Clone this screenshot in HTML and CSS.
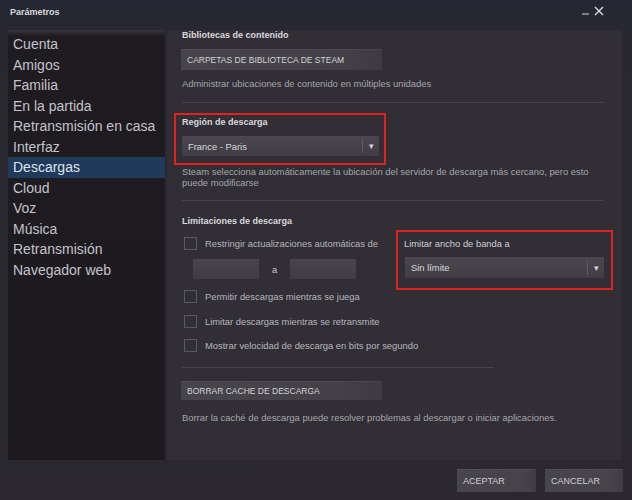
FILE: index.html
```html
<!DOCTYPE html>
<html lang="es">

<head>
  <meta charset="UTF-8">
  <meta name="viewport" content="width=device-width, initial-scale=1.0">
  <title>Parámetros</title>
  <link rel="stylesheet" href="styles.css">
</head>

<body>

  <div class="window">

    <header class="titlebar">
      <span class="title">Parámetros</span>
      <div class="win-controls">
        <svg class="win-min" width="8" height="8" viewBox="0 0 8 8">
          <line x1="0" y1="7" x2="7" y2="7" stroke="#bdbbc0" stroke-width="1.2" />
        </svg>
        <svg class="win-close" width="10" height="10" viewBox="0 0 10 10">
          <line x1="1" y1="1" x2="9" y2="9" stroke="#d6d4d9" stroke-width="1.4" />
          <line x1="9" y1="1" x2="1" y2="9" stroke="#d6d4d9" stroke-width="1.4" />
        </svg>
      </div>
    </header>

    <div class="body-row">

      <nav class="sidebar">
        <a href="#">Cuenta</a>
        <a href="#">Amigos</a>
        <a href="#">Familia</a>
        <a href="#">En la partida</a>
        <a href="#">Retransmisión en casa</a>
        <a href="#">Interfaz</a>
        <a href="#" class="active">Descargas</a>
        <a href="#">Cloud</a>
        <a href="#">Voz</a>
        <a href="#">Música</a>
        <a href="#">Retransmisión</a>
        <a href="#">Navegador web</a>
      </nav>

      <main class="panel">

        <h2 class="section-title">Bibliotecas de contenido</h2>
        <button class="btn btn-wide">Carpetas de biblioteca de Steam</button>
        <p class="desc desc-libraries">Administrar ubicaciones de contenido en múltiples unidades</p>

        <div class="rule rule-long"></div>

        <div class="highlight region-box">
          <h2 class="section-title">Región de descarga</h2>
          <div class="dropdown">
            <span class="dropdown-value">France - Paris</span>
            <span class="dropdown-arrow">&#9662;</span>
          </div>
        </div>
        <p class="desc desc-region">Steam selecciona automáticamente la ubicación del servidor de descarga más cercano, pero esto puede modificarse</p>

        <div class="rule rule-long rule-region"></div>

        <h2 class="section-title limits-title">Limitaciones de descarga</h2>

        <div class="limits">
          <div class="limits-left">
            <label class="check first">
              <span class="box"></span>Restringir actualizaciones automáticas de
            </label>
            <div class="time-range">
              <span class="time-input"></span>
              <span class="time-sep">a</span>
              <span class="time-input"></span>
            </div>
          </div>

          <div class="highlight bandwidth-box">
            <h2 class="section-title plain">Limitar ancho de banda a</h2>
            <div class="dropdown dropdown-bw">
              <span class="dropdown-value">Sin límite</span>
              <span class="dropdown-arrow">&#9662;</span>
            </div>
          </div>
        </div>

        <label class="check">
          <span class="box"></span>Permitir descargas mientras se juega
        </label>
        <label class="check">
          <span class="box"></span>Limitar descargas mientras se retransmite
        </label>
        <label class="check">
          <span class="box"></span>Mostrar velocidad de descarga en bits por segundo
        </label>

        <div class="rule rule-short"></div>

        <button class="btn btn-wide btn-cache">Borrar cache de descarga</button>
        <p class="desc desc-cache">Borrar la caché de descarga puede resolver problemas al descargar o iniciar aplicaciones.</p>

      </main>
    </div>

    <footer class="footer">
      <button class="btn btn-footer">Aceptar</button>
      <button class="btn btn-footer btn-cancel">Cancelar</button>
    </footer>

  </div>

</body>

</html>
```

FILE: styles.css
```css
body {
  margin: 0;
  padding: 0;
  background: #2a282e;
  font-family: 'Liberation Sans', Arial, sans-serif;
  overflow: hidden;
}

.window {
  width: 632px;
  height: 500px;
  display: flex;
  flex-direction: column;
  background: linear-gradient(180deg, #242733 0px, #29282f 40px, #2b292f 100%);
}

/* title bar */
.titlebar {
  height: 30px;
  display: flex;
  align-items: center;
  justify-content: space-between;
  padding: 0 28px 2px 10px;
  box-sizing: border-box;
}

.title {
  color: #dcdade;
  font-size: 9px;
  font-weight: bold;
  margin-top: -4px;
}

.win-controls {
  display: flex;
  align-items: center;
  gap: 4px;
  margin-top: -6px;
}

/* sidebar + content */
.body-row {
  display: flex;
  height: 430px;
  padding-left: 8px;
  gap: 2px;
}

.sidebar {
  width: 157px;
  background: linear-gradient(180deg, #38363c 0px, #1e1c21 6px, #1c1a1f 100%);
  padding-top: 4px;
  box-sizing: border-box;
  display: flex;
  flex-direction: column;
}

.sidebar a {
  display: block;
  height: 20.5px;
  line-height: 20.5px;
  padding-left: 5px;
  font-size: 14px;
  color: #c4c2c8;
  text-decoration: none;
  white-space: nowrap;
}

.sidebar a.active {
  background: #1f3a5a;
  color: #dfe3ea;
}

.panel {
  width: 455px;
  background: #312f35;
  padding-left: 15px;
  box-sizing: border-box;
  overflow: hidden;
}

.section-title {
  margin: 0;
  height: 10px;
  line-height: 10px;
  font-size: 9px;
  font-weight: bold;
  color: #d9d7dc;
}

.section-title.plain {
  font-weight: normal;
  font-size: 9.4px;
  color: #cfcdd2;
}

.desc {
  margin: 0;
  font-size: 9.4px;
  line-height: 11px;
  color: #a6a4aa;
}

/* buttons */
.btn {
  display: block;
  border: none;
  padding: 0 6px;
  text-align: left;
  font-family: 'Liberation Sans', Arial, sans-serif;
  font-size: 8.5px;
  text-transform: uppercase;
  color: #d2d0d5;
  background: linear-gradient(90deg, #47454b 0%, #434147 80%, #3d3b41 100%);
  box-shadow: inset 0 1px 0 rgba(255, 255, 255, 0.05);
}

.btn-wide {
  width: 201px;
  height: 21px;
  margin: 9px 0 0 -1px;
}

.desc-libraries {
  margin-top: 8px;
}

.rule {
  height: 1px;
  background: #46444a;
}

.rule-long {
  width: 422px;
  margin-top: 13px;
}

/* red annotation frames */
.highlight {
  border: 2px solid #e0221c;
  box-sizing: border-box;
}

.region-box {
  width: 212px;
  margin: 10px 0 0 -8px;
  padding: 2px 5px 7px 6px;
}

.dropdown {
  display: flex;
  align-items: center;
  justify-content: space-between;
  height: 20px;
  margin-top: 9px;
  background: linear-gradient(180deg, #4a484e 0%, #403e44 100%);
  font-size: 9.4px;
  color: #dad8dd;
}

.dropdown-value {
  padding-left: 6px;
}

.dropdown-arrow {
  width: 16px;
  height: 14px;
  line-height: 14px;
  text-align: center;
  font-size: 9px;
  color: #d6d4d9;
  border-left: 1px solid #5e5c62;
}

.desc-region {
  width: 415px;
  margin-top: 1px;
}

.rule-region {
  margin-top: 12px;
}

.limits-title {
  margin-top: 15px;
}

/* limitation options */
.limits {
  display: flex;
  align-items: flex-start;
}

.limits-left {
  width: 214px;
  padding-top: 10px;
}

.check {
  display: flex;
  align-items: center;
  height: 13px;
  margin-top: 11.5px;
  font-size: 9.4px;
  color: #b7b5bb;
  white-space: nowrap;
}

.check.first {
  margin-top: 1px;
}

.box {
  width: 11px;
  height: 11px;
  margin: 0 8px 0 2px;
  border: 1px solid #5b5960;
  flex-shrink: 0;
}

.time-range {
  display: flex;
  align-items: center;
  margin: 9px 0 0 11px;
}

.time-input {
  width: 66px;
  height: 20px;
  background: linear-gradient(180deg, #48464c 0%, #3f3d43 100%);
}

.time-sep {
  width: 31px;
  text-align: center;
  font-size: 9.4px;
  color: #c8c6cb;
}

.bandwidth-box {
  width: 217px;
  height: 60px;
  margin-top: 4px;
  padding: 7px 7px 0 6px;
}

.dropdown-bw {
  height: 21px;
  margin: 8px 0 0 1px;
}

.limits + .check {
  margin-top: 0;
}

.rule-short {
  width: 312px;
  margin-top: 15px;
}

.btn-cache {
  height: 19px;
  margin-top: 13px;
}

.desc-cache {
  margin-top: 12px;
}

/* dialog buttons */
.footer {
  display: flex;
  justify-content: flex-end;
  gap: 9px;
  padding: 9px 9px 0 0;
}

.btn-footer {
  width: 79px;
  height: 23px;
  font-size: 9px;
  color: #cfcdd2;
  padding-left: 6px;
  background: linear-gradient(90deg, #48464c 0%, #46444a 85%, #3e3c42 100%);
}

.btn-cancel {
  width: 78px;
}
```
